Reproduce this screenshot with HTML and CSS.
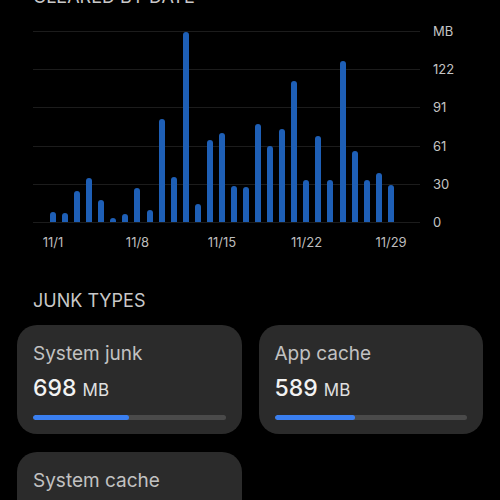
FILE: index.html
```html
<html lang="en">
<head>
  <title>Junk cleared</title>
  <link rel="stylesheet" href="styles.css">
</head>
<body>
<h2 class="section-title top">Cleared by date</h2>

<div class="chart">
  <div class="plot">
    <div class="bars">
      <span class="bar" style="height: 10px"></span>
      <span class="bar" style="height: 9px"></span>
      <span class="bar" style="height: 31px"></span>
      <span class="bar" style="height: 44px"></span>
      <span class="bar" style="height: 22px"></span>
      <span class="bar" style="height: 4px"></span>
      <span class="bar" style="height: 8px"></span>
      <span class="bar" style="height: 34px"></span>
      <span class="bar" style="height: 12px"></span>
      <span class="bar" style="height: 103px"></span>
      <span class="bar" style="height: 45px"></span>
      <span class="bar" style="height: 190px"></span>
      <span class="bar" style="height: 18px"></span>
      <span class="bar" style="height: 82px"></span>
      <span class="bar" style="height: 89px"></span>
      <span class="bar" style="height: 36px"></span>
      <span class="bar" style="height: 35px"></span>
      <span class="bar" style="height: 98px"></span>
      <span class="bar" style="height: 76px"></span>
      <span class="bar" style="height: 93px"></span>
      <span class="bar" style="height: 141px"></span>
      <span class="bar" style="height: 42px"></span>
      <span class="bar" style="height: 86px"></span>
      <span class="bar" style="height: 42px"></span>
      <span class="bar" style="height: 161px"></span>
      <span class="bar" style="height: 71px"></span>
      <span class="bar" style="height: 42px"></span>
      <span class="bar" style="height: 49px"></span>
      <span class="bar" style="height: 37px"></span>
    </div>
    <div class="dates">
      <span>11/1</span>
      <span>11/8</span>
      <span>11/15</span>
      <span>11/22</span>
      <span>11/29</span>
    </div>
  </div>
  <div class="axis">
    <span>MB</span>
    <span>122</span>
    <span>91</span>
    <span>61</span>
    <span>30</span>
    <span>0</span>
  </div>
</div>

<h2 class="section-title">Junk types</h2>

<div class="cards">
  <div class="card">
    <div class="card-name">System junk</div>
    <div class="card-size">698 <small>MB</small></div>
    <div class="meter"><div class="meter-fill" style="width: 50%"></div></div>
  </div>
  <div class="card">
    <div class="card-name">App cache</div>
    <div class="card-size">589 <small>MB</small></div>
    <div class="meter"><div class="meter-fill" style="width: 42%"></div></div>
  </div>
  <div class="card">
    <div class="card-name">System cache</div>
    <div class="card-size">312 <small>MB</small></div>
    <div class="meter"><div class="meter-fill" style="width: 22%"></div></div>
  </div>
</div>
</body>
</html>
```

FILE: styles.css
```css
html, body {
    background: #000;
}

body {
    margin: 0;
    padding: 0 17px;
    color: #c6c6c6;
    font-family: Inter, "Noto Sans", sans-serif;
    overflow: hidden;
}

.section-title {
    margin: 39px 0 12px 16px;
    font-size: 18px;
    line-height: 24px;
    font-weight: normal;
    text-transform: uppercase;
    color: #c8c8c8;
}

.section-title.top {
    margin-top: -15px;
    margin-bottom: 22px;
}

/* chart */

.chart {
    display: flex;
    padding-left: 16px;
}

.plot {
    width: 387px;
}

.bars {
    height: 192px;
    box-sizing: border-box;
    padding: 0 26px 1px 17px;
    display: flex;
    align-items: flex-end;
    justify-content: space-between;
    background: repeating-linear-gradient(to bottom, #1c1c1c 0 1px, transparent 1px 38.2px);
}

.bar {
    width: 6px;
    background: #1e5fb6;
    border-radius: 3px 3px 0 0;
}

.dates {
    display: flex;
    justify-content: space-between;
    padding: 0 26px 0 17px;
    margin-top: 11px;
    font-size: 13px;
    line-height: 16px;
    color: #bdbdbd;
}

.dates span {
    width: 6px;
    display: flex;
    justify-content: center;
    white-space: nowrap;
}

.axis {
    display: flex;
    flex-direction: column;
    justify-content: space-between;
    height: 207px;
    margin: -8px 0 0 13px;
    font-size: 13px;
    line-height: 16px;
    color: #c4c4c4;
}

/* junk cards */

.cards {
    display: grid;
    grid-template-columns: 1fr 1fr;
    gap: 18px 17px;
}

.card {
    height: 109px;
    box-sizing: border-box;
    padding: 17px 16px 16px;
    background: #2b2b2b;
    border-radius: 20px;
}

.card-name {
    font-size: 19px;
    line-height: 24px;
    color: #c2c2c2;
}

.card-size {
    margin-top: 8px;
    font-size: 23px;
    line-height: 28px;
    font-weight: 500;
    color: #f2f2f2;
}

.card-size small {
    font-size: 17px;
    font-weight: normal;
    color: #e0e0e0;
}

.meter {
    margin-top: 11px;
    height: 5px;
    border-radius: 3px;
    background: #4a4a4a;
    overflow: hidden;
}

.meter-fill {
    height: 100%;
    border-radius: 3px;
    background: #3a7ff0;
}
```
